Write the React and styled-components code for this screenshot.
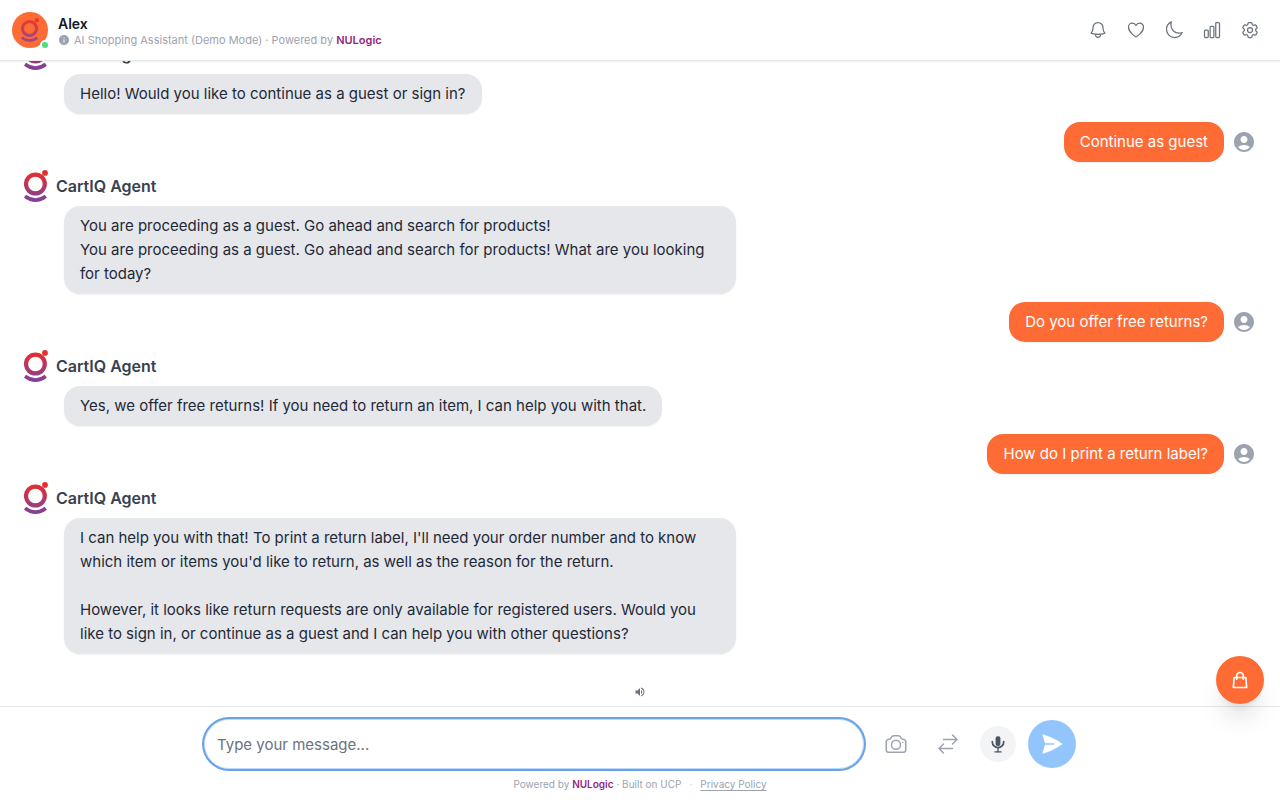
import React, { useState } from "react";
import styled, { createGlobalStyle } from "styled-components";
import {
  HiOutlineArrowsRightLeft,
  HiOutlineBell,
  HiOutlineCamera,
  HiOutlineChartBar,
  HiOutlineCog6Tooth,
  HiOutlineHeart,
  HiOutlineMoon,
  HiPaperAirplane,
} from "react-icons/hi2";
import { HiOutlineShoppingBag } from "react-icons/hi";
import { MdAccountCircle, MdInfo, MdVolumeUp } from "react-icons/md";

const GlobalStyle = createGlobalStyle`
  *, *::before, *::after {
    box-sizing: border-box;
  }
  body {
    margin: 0;
    background: #fff;
    color: #1f2937;
    font-family: Inter, "Liberation Sans", sans-serif;
    font-size: 15px;
    line-height: 24px;
  }
  button, input {
    font: inherit;
  }
`;

const Page = styled.div`
  display: flex;
  flex-direction: column;
  height: 100vh;
`;

const Header = styled.header`
  display: flex;
  align-items: center;
  justify-content: space-between;
  flex-shrink: 0;
  padding: 12px;
  background: #fff;
  border-bottom: 1px solid #e5e7eb;
  box-shadow: 0 1px 2px rgba(0, 0, 0, 0.08);
  z-index: 1;
`;

const Profile = styled.div`
  display: flex;
  align-items: center;
  gap: 10px;
`;

const ProfileText = styled.div`
  padding-top: 2px;
`;

const Avatar = styled.div`
  position: relative;
  display: flex;
  align-items: center;
  justify-content: center;
  width: 36px;
  height: 36px;
  border-radius: 50%;
  background: #ff6b35;
`;

const OnlineDot = styled.span`
  position: absolute;
  right: -2px;
  bottom: -2px;
  width: 10px;
  height: 10px;
  border: 2px solid #fff;
  border-radius: 50%;
  background: #4ade80;
`;

const AgentTitle = styled.h1`
  margin: 0;
  color: #111827;
  font-size: 14px;
  line-height: 18px;
  font-weight: 600;
`;

const Subtitle = styled.p`
  display: flex;
  align-items: center;
  gap: 4px;
  margin: 0;
  color: #9ca3af;
  font-size: 11px;
  line-height: 14px;
`;

const Brand = styled.strong`
  color: #93277f;
  font-weight: 600;
`;

const Toolbar = styled.nav`
  display: flex;
  gap: 2px;
`;

const IconButton = styled.button`
  display: flex;
  align-items: center;
  justify-content: center;
  flex-shrink: 0;
  width: ${({ $size }) => $size}px;
  height: ${({ $size }) => $size}px;
  padding: 0;
  border: 0;
  border-radius: 50%;
  background: ${({ $bg }) => $bg || "transparent"};
  color: ${({ $color }) => $color || "#6b7280"};
  cursor: pointer;
`;

const Messages = styled.main`
  display: flex;
  flex: 1;
  flex-direction: column;
  justify-content: flex-end;
  gap: 8px;
  min-height: 0;
  padding: 0 24px 8px;
  overflow: hidden;
`;

const AgentMessage = styled.article`
  display: flex;
  flex-direction: column;
  align-items: flex-start;
  flex-shrink: 0;
  gap: 4px;
`;

const AgentName = styled.div`
  display: flex;
  align-items: center;
  gap: 8px;
  height: 32px;
  color: #374151;
  font-size: 16px;
  font-weight: 600;
`;

const Bubble = styled.p`
  max-width: 672px;
  margin: 0;
  padding: 8px 16px;
  border-radius: 16px;
  background: ${({ $user }) => ($user ? "#ff6b35" : "#e5e7eb")};
  color: ${({ $user }) => ($user ? "#fff" : "#1f2937")};
  white-space: pre-line;
  box-shadow: 0 1px 2px rgba(0, 0, 0, 0.05);
`;

const AgentBubble = styled(Bubble)`
  margin-left: 40px;
`;

const UserMessage = styled.article`
  display: flex;
  align-items: center;
  justify-content: flex-end;
  flex-shrink: 0;
  gap: 8px;
  color: #9ca3af;
`;

const SoundRow = styled.div`
  display: flex;
  justify-content: center;
  flex-shrink: 0;
  padding-top: 24px;
`;

const Footer = styled.footer`
  flex-shrink: 0;
  padding-bottom: 8px;
  border-top: 1px solid #e5e7eb;
`;

const Composer = styled.form`
  display: flex;
  align-items: center;
  gap: 12px;
  max-width: 896px;
  margin: 0 auto;
  padding: 12px 12px 8px;
`;

const MessageInput = styled.input`
  flex: 1;
  min-width: 0;
  height: 50px;
  padding: 12px;
  border: 1px solid #bfdbfe;
  border-radius: 25px;
  outline: none;
  background: #fff;
  box-shadow: 0 0 0 2px #6ba1e6;
  color: #1f2937;

  &::placeholder {
    color: #6b7280;
    opacity: 1;
  }
`;

const Legal = styled.p`
  display: flex;
  justify-content: center;
  gap: 8px;
  margin: 0;
  color: #9ca3af;
  font-size: 10px;
  line-height: 15px;
`;

const Separator = styled.span`
  color: #d1d5db;
`;

const PolicyLink = styled.a`
  color: inherit;
  text-decoration: underline;
  text-underline-offset: 2px;
`;

const CartButton = styled(IconButton)`
  position: fixed;
  right: 16px;
  bottom: 96px;
  z-index: 2;
  box-shadow: 0 20px 25px -5px rgba(0, 0, 0, 0.1), 0 8px 10px -6px rgba(0, 0, 0, 0.1);
`;

const Logo = ({ id, width, height, opacity = 1 }) => (
  <svg width={width} height={height} viewBox="0 0 24 32" opacity={opacity} aria-hidden="true">
    <defs>
      <linearGradient id={id} gradientUnits="userSpaceOnUse" x1="0" y1="0" x2="0" y2="32">
        <stop offset="0" stopColor="#e62e2d" />
        <stop offset="0.25" stopColor="#d8303f" />
        <stop offset="1" stopColor="#7a429f" />
      </linearGradient>
    </defs>
    <g fill="none" stroke={`url(#${id})`}>
      <circle cx="11.4" cy="14" r="9.4" strokeWidth="4.2" />
      <path d="M1 26.2Q11.4 34 21.8 26.2" strokeWidth="3.7" />
    </g>
    <circle cx="21" cy="2.9" r="2.9" fill="#e62e2d" />
  </svg>
);

const MicIcon = () => (
  <svg width="14" height="17" viewBox="0 0 14 17" fill="none" stroke="currentColor" strokeLinecap="round" aria-hidden="true">
    <rect x="4.6" y="0.3" width="4.8" height="9.6" rx="2" fill="currentColor" stroke="none" />
    <path d="M1.3 5.6v.3a5.7 5.7 0 0 0 11.4 0v-.3" strokeWidth="1.7" />
    <path d="M7 11.8v4" strokeWidth="1.3" />
    <path d="M3.9 15.9h6.2" strokeWidth="1.3" />
  </svg>
);

const MESSAGES = [
  { from: "agent", text: "Hello! Would you like to continue as a guest or sign in?" },
  { from: "user", text: "Continue as guest" },
  {
    from: "agent",
    text: "You are proceeding as a guest. Go ahead and search for products!\nYou are proceeding as a guest. Go ahead and search for products! What are you looking for today?",
  },
  { from: "user", text: "Do you offer free returns?" },
  {
    from: "agent",
    text: "Yes, we offer free returns! If you need to return an item, I can help you with that.",
  },
  { from: "user", text: "How do I print a return label?" },
  {
    from: "agent",
    text: "I can help you with that! To print a return label, I'll need your order number and to know which item or items you'd like to return, as well as the reason for the return.\n\nHowever, it looks like return requests are only available for registered users. Would you like to sign in, or continue as a guest and I can help you with other questions?",
  },
];

const ACTIONS = [
  { label: "Notifications", Icon: HiOutlineBell },
  { label: "Wishlist", Icon: HiOutlineHeart },
  { label: "Dark mode", Icon: HiOutlineMoon },
  { label: "Analytics", Icon: HiOutlineChartBar },
  { label: "Settings", Icon: HiOutlineCog6Tooth },
];

const Message = ({ id, from, text }) =>
  from === "user" ? (
    <UserMessage>
      <Bubble $user>{text}</Bubble>
      <MdAccountCircle size={24} />
    </UserMessage>
  ) : (
    <AgentMessage>
      <AgentName>
        <Logo id={`logo-${id}`} width={24} height={32} />
        CartIQ Agent
      </AgentName>
      <AgentBubble>{text}</AgentBubble>
    </AgentMessage>
  );

const App = () => {
  const [draft, setDraft] = useState("");

  const handleSubmit = (event) => {
    event.preventDefault();
    setDraft("");
  };

  return (
    <Page>
      <GlobalStyle />
      <Header>
        <Profile>
          <Avatar>
            <Logo id="logo-avatar" width={18} height={24} opacity={0.8} />
            <OnlineDot />
          </Avatar>
          <ProfileText>
            <AgentTitle>Alex</AgentTitle>
            <Subtitle>
              <MdInfo size={12} />
              <span>
                AI Shopping Assistant (Demo Mode) · Powered by <Brand>NULogic</Brand>
              </span>
            </Subtitle>
          </ProfileText>
        </Profile>
        <Toolbar>
          {ACTIONS.map(({ label, Icon }) => (
            <IconButton key={label} type="button" aria-label={label} $size={36}>
              <Icon size={20} />
            </IconButton>
          ))}
        </Toolbar>
      </Header>

      <Messages>
        {MESSAGES.map((message, index) => (
          <Message key={index} id={index} {...message} />
        ))}
        <SoundRow>
          <IconButton type="button" aria-label="Sound" $size={12}>
            <MdVolumeUp size={12} />
          </IconButton>
        </SoundRow>
      </Messages>

      <Footer>
        <Composer onSubmit={handleSubmit}>
          <MessageInput
            aria-label="Message"
            placeholder="Type your message..."
            value={draft}
            onChange={(event) => setDraft(event.target.value)}
          />
          <IconButton type="button" aria-label="Upload image" $size={40} $color="#9ca3af">
            <HiOutlineCamera size={24} />
          </IconButton>
          <IconButton type="button" aria-label="Compare" $size={40} $color="#9ca3af">
            <HiOutlineArrowsRightLeft size={24} />
          </IconButton>
          <IconButton type="button" aria-label="Voice input" $size={36} $bg="#f3f4f6" $color="#4b5563">
            <MicIcon />
          </IconButton>
          <IconButton type="submit" aria-label="Send" $size={48} $bg="#93c5fd" $color="#fff">
            <HiPaperAirplane size={24} />
          </IconButton>
        </Composer>
        <Legal>
          <span>
            Powered by <Brand>NULogic</Brand> · Built on UCP
          </span>
          <Separator>·</Separator>
          <PolicyLink href="#privacy">Privacy Policy</PolicyLink>
        </Legal>
      </Footer>

      <CartButton type="button" aria-label="Cart" $size={48} $bg="#ff6b35" $color="#fff">
        <HiOutlineShoppingBag size={20} />
      </CartButton>
    </Page>
  );
};

export default App;
